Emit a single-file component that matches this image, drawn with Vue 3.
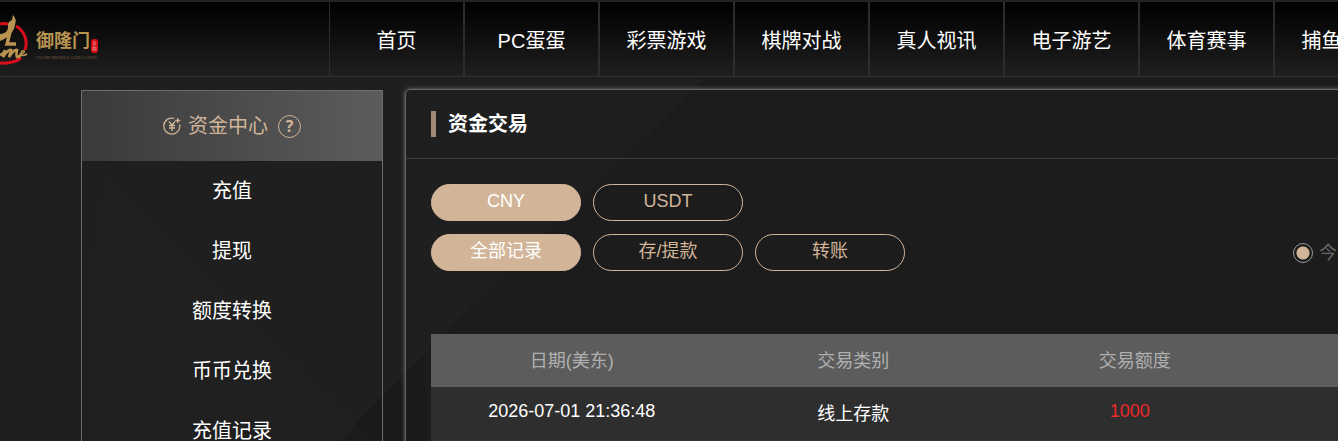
<script setup>
import { ref } from 'vue'

const nav = ['首页', 'PC蛋蛋', '彩票游戏', '棋牌对战', '真人视讯', '电子游艺', '体育赛事', '捕鱼游戏']
const menu = ['充值', '提现', '额度转换', '币币兑换', '充值记录']
const currencies = ['CNY', 'USDT']
const types = ['全部记录', '存/提款', '转账']
const currency = ref('CNY')
const type = ref('全部记录')
const range = ref('today')
const rows = [{ date: '2026-07-01 21:36:48', kind: '线上存款', amount: '1000' }]
</script>

<template>
  <div class="page">
    <svg class="backdrop" aria-hidden="true" viewBox="0 0 1338 441" preserveAspectRatio="xMinYMin slice">
      <path d="M0 78H705L425 353L338 441H0Z" fill="#1f1f1f" />
      <path d="M107 180L356 425L340 441H90Q80 300 107 180Z" fill="#202020" />
      <path d="M356 425L425 353V441H372Z" fill="#1a1a1a" />
    </svg>
    <header class="top">
      <a class="logo" href="#" aria-label="御隆门">
        <svg class="mark" viewBox="0 0 30 54" aria-hidden="true">
          <path d="M0 12Q4 11 8 12M16 14A20 20 0 0 1 25 38M21 46Q13 52 0 51" fill="none" stroke="#d80e1b" stroke-width="3" />
          <path d="M0 22C5 22 8 19 8 15Q7 10 12 8L13 3Q17 7 15 13C14 20 8 26 0 29Z" fill="#b99450" />
          <path d="M10 20L7 32H16" fill="none" stroke="#b99450" stroke-width="3.4" />
          <path d="M0 43Q4 42 5 38L3 45Q8 37 11 38L9 45Q14 37 17 38Q16 43 17 45Q20 45 21 42" fill="none" stroke="#b99450" stroke-width="2.6" />
          <path d="M21 42Q25 41 24 39Q21 38 21 42Q22 45 27 42" fill="none" stroke="#b99450" stroke-width="1.6" />
        </svg>
        <span class="brand">
          <span class="name">御隆门</span>
          <span class="sub">GRAND IMPERIAL GATE CASINO</span>
        </span>
        <svg class="seal" viewBox="0 0 7 15" aria-hidden="true">
          <rect width="7" height="14" rx="3" fill="#d80e1b" />
          <path d="M2 3H5M3 3V6M2 6L5 5M2 8H5V11H2ZM3 8V11" fill="none" stroke="#ed9c8c" stroke-width="0.7" />
        </svg>
      </a>
      <nav class="nav">
        <a v-for="n in nav" :key="n" href="#">{{ n }}</a>
      </nav>
    </header>

    <div class="body">
      <aside class="side">
        <h2>
          <svg class="coin" viewBox="0 0 18 18" aria-hidden="true">
            <g fill="none" stroke="#d2b599" stroke-width="1.3">
              <path d="M11 1.4A8 8 0 1 0 16.6 7.5M14.7 1V6M12.2 3.5H17.2" />
              <path d="M6 4.5L9 8L12 4.5M9 8V14M6 8.5H12M6 11H12" />
            </g>
          </svg>
          <span>资金中心</span>
          <button class="help" type="button" aria-label="帮助">?</button>
        </h2>
        <ul>
          <li v-for="m in menu" :key="m"><a href="#">{{ m }}</a></li>
        </ul>
      </aside>

      <main class="panel">
        <h1><span>资金交易</span></h1>
        <div class="content">
          <div class="pills">
            <button v-for="c in currencies" :key="c" type="button" :class="{ on: c === currency }" @click="currency = c">{{ c }}</button>
          </div>
          <div class="pills">
            <button v-for="t in types" :key="t" type="button" :class="{ on: t === type }" @click="type = t">{{ t }}</button>
            <label class="range"><input v-model="range" type="radio" name="range" value="today"><span>今天</span></label>
          </div>
          <table>
            <thead>
              <tr><th>日期(美东)</th><th>交易类别</th><th>交易额度</th><th></th></tr>
            </thead>
            <tbody>
              <tr v-for="r in rows" :key="r.date">
                <td>{{ r.date }}</td><td>{{ r.kind }}</td><td class="amount">{{ r.amount }}</td><td></td>
              </tr>
            </tbody>
          </table>
        </div>
      </main>
    </div>
  </div>
</template>

<style>
body {
  margin: 0;
  background: #1c1c1c;
}
</style>

<style scoped>
* {
  box-sizing: border-box;
}
.page {
  position: relative;
  height: 100vh;
  overflow: hidden;
  font-family: "Liberation Sans", "Noto Sans CJK SC", sans-serif;
  color: #fff;
}
.backdrop {
  position: absolute;
  inset: 0;
  width: 100%;
  height: 100%;
}
a {
  color: inherit;
  text-decoration: none;
}
.top {
  position: relative;
  display: flex;
  height: 77px;
  border-top: 2px solid #222;
  border-bottom: 1px solid #303030;
  background: linear-gradient(#000, #1f1f1f);
}
.logo {
  display: flex;
  flex: 0 0 329px;
  align-items: flex-start;
  padding-top: 10px;
}
.mark {
  width: 30px;
  height: 54px;
}
.brand {
  display: flex;
  flex-direction: column;
  width: 54px;
  margin: 14px 0 0 6px;
  white-space: nowrap;
  color: #b99450;
}
.name {
  font-size: 18px;
  font-weight: 700;
  line-height: 30px;
}
.sub {
  font-family: "Liberation Serif", serif;
  font-size: 4px;
  line-height: 4px;
  color: #75603a;
}
.seal {
  width: 7px;
  height: 15px;
  margin: 27px 0 0 1px;
}
.nav {
  display: flex;
}
.nav a {
  flex: 0 0 135px;
  border-right: 2px solid #2c2c2c;
  font-size: 20px;
  line-height: 78px;
  text-align: center;
  white-space: nowrap;
}
.nav a:first-child {
  flex-basis: 136px;
  border-left: 1px solid #2c2c2c;
}
.body {
  position: relative;
  display: flex;
  gap: 22px;
  padding: 13px 0 0 81px;
}
.side {
  flex: 0 0 302px;
  border: 1px solid #6d6d6d;
  padding-bottom: 60px;
}
.side h2 {
  display: flex;
  align-items: center;
  justify-content: center;
  height: 70px;
  margin: 0;
  background: linear-gradient(90deg, #3a3a3a, #5c5c5c);
  color: #d2b599;
  font-size: 20px;
  font-weight: 400;
  line-height: 30px;
}
.coin {
  width: 18px;
  height: 18px;
  margin-right: 7px;
}
.help {
  width: 23px;
  height: 23px;
  margin-left: 10px;
  padding: 0;
  border: 1px solid #d2b599;
  border-radius: 50%;
  background: none;
  color: #d2b599;
  font: 700 16px "Open Sans", sans-serif;
  line-height: 20px;
}
ul {
  margin: 0;
  padding: 0;
  list-style: none;
}
li {
  font-size: 20px;
  line-height: 60px;
  text-align: center;
}
.panel {
  flex: 1 0 1178px;
  margin-top: -1px;
  border: 1px solid #666;
  border-radius: 5px;
  box-shadow: 0 0 4px #777;
}
h1 {
  display: flex;
  align-items: center;
  height: 69px;
  margin: 0;
  padding-left: 25px;
  border-bottom: 1px solid #413a34;
  font-size: 20px;
  line-height: 26px;
}
h1 span {
  padding-left: 12px;
  border-left: 5px solid #a18978;
}
.content {
  padding: 25px 25px 0;
}
.pills {
  display: flex;
  gap: 12px;
  margin-bottom: 13px;
}
.pills button {
  width: 150px;
  height: 37px;
  padding: 0 0 2px;
  border: 1px solid #d2b599;
  border-radius: 19px;
  background: none;
  color: #d2b599;
  font: inherit;
  font-size: 18px;
  line-height: 33px;
}
.pills .on {
  background: #d2b599;
  color: #fff;
}
.range {
  display: flex;
  align-items: center;
  gap: 6px;
  margin-left: 376px;
  color: #666;
  font-size: 18px;
  line-height: 34px;
  white-space: nowrap;
}
.range input {
  appearance: none;
  width: 20px;
  height: 20px;
  margin: 0;
  border: 1px solid #999;
  border-radius: 50%;
}
.range input:checked {
  background: radial-gradient(circle, #d2b599 6px, transparent 7px);
}
table {
  width: 100%;
  margin-top: 63px;
  border-collapse: collapse;
  table-layout: fixed;
  font-size: 18px;
}
th {
  height: 53px;
  padding: 0 0 4px;
  background: #5c5c5c;
  color: #b0b0b0;
  font-weight: 400;
}
td {
  height: 54px;
  padding: 0 0 4px;
  border-bottom: 2px solid #363636;
  background: #2e2e2e;
  text-align: center;
}
td.amount {
  padding-right: 10px;
  color: #f02828;
}
</style>
